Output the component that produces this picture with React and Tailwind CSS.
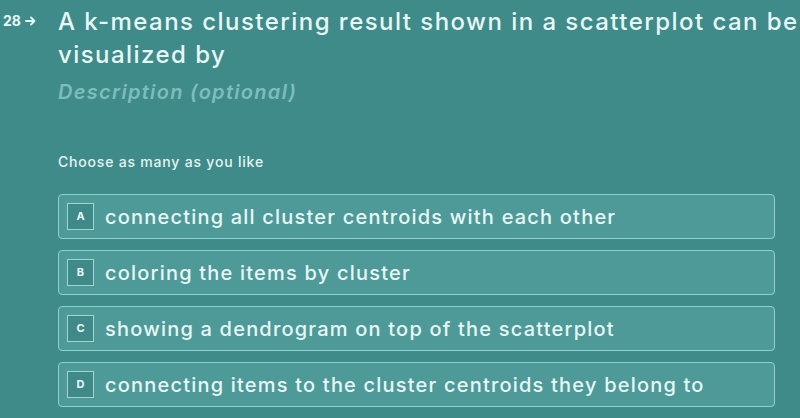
const options = [
  { key: 'A', label: 'connecting all cluster centroids with each other' },
  { key: 'B', label: 'coloring the items by cluster' },
  { key: 'C', label: 'showing a dendrogram on top of the scatterplot' },
  { key: 'D', label: 'connecting items to the cluster centroids they belong to' },
]

export default function App() {
  return (
    <div className="w-[800px] h-[418px] overflow-hidden bg-[#3f8b8a] text-[#e6f7f6]" style={{ fontFamily: 'Inter, "Noto Sans", sans-serif' }}>
      <div className="flex items-start pt-[5px]">
        <div className="w-[58px] shrink-0 pl-[3px] pt-[9px] flex items-center text-[14px] font-bold leading-none">
          28
          <svg className="ml-[4px]" width="11" height="10" viewBox="0 0 11 10" fill="none" stroke="currentColor" strokeWidth="1.8" strokeLinecap="round" strokeLinejoin="round">
            <path d="M1 5h8.5M6 1.5 9.5 5 6 8.5" />
          </svg>
        </div>
        <div className="flex-1">
          <h1 className="text-[24px] font-medium leading-[33px] tracking-[1.45px] whitespace-pre-line">
            {'A k-means clustering result shown in a scatterplot can be\nvisualized by'}
          </h1>
          <p className="mt-[7px] text-[20px] font-semibold italic leading-[28px] tracking-[1.3px] text-[#7dbdbc]">Description (optional)</p>
          <p className="mt-[47px] text-[14px] font-medium leading-[18px] tracking-[0.8px] text-[#e3f4f3]">Choose as many as you like</p>
          <div className="mt-[23px] w-[717px] flex flex-col gap-[11px]">
            {options.map(o => (
              <div key={o.key} className="h-[45px] flex items-center rounded-[4px] border border-[#8fd0cf] bg-[#4e9a99] pl-[8px]">
                <div className="w-[27px] h-[27px] shrink-0 flex items-center justify-center border border-[#9fd6d5] bg-[#3f8a89] text-[11px] font-bold text-[#e8f8f7]">
                  {o.key}
                </div>
                <span className="ml-[11px] text-[20px] font-medium leading-none tracking-[1.2px] text-[#e6f7f6]">{o.label}</span>
              </div>
            ))}
          </div>
        </div>
      </div>
    </div>
  )
}
